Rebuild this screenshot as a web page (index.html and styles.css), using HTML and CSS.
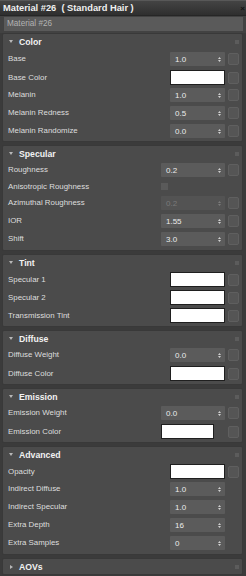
FILE: index.html
```html
<!DOCTYPE html>
<html>
<head>
<meta charset="utf-8">
<link rel="stylesheet" href="styles.css">
</head>
<body>
<div class="titlebar"><span class="ttl">Material #26  ( Standard Hair )</span><span class="close">×</span></div>
<div class="namebar"><div class="namefield">Material #26</div></div>
<div class="rollouts">

  <section class="rollout first">
    <div class="rhead"><span class="tri down"></span><span class="rtitle">Color</span><span class="pin"></span></div>
    <div class="rbody">
      <div class="row"><span class="lbl">Base</span><div class="spin"><span>1.0</span><svg class="arr" viewBox="0 0 3 7"><path d="M0 3L1.5 1L3 3ZM0 4L1.5 6L3 4Z"/></svg></div><span class="btn"></span></div>
      <div class="row"><span class="lbl">Base Color</span><div class="swatch"></div><span class="btn"></span></div>
      <div class="row"><span class="lbl">Melanin</span><div class="spin"><span>1.0</span><svg class="arr" viewBox="0 0 3 7"><path d="M0 3L1.5 1L3 3ZM0 4L1.5 6L3 4Z"/></svg></div><span class="btn"></span></div>
      <div class="row"><span class="lbl">Melanin Redness</span><div class="spin"><span>0.5</span><svg class="arr" viewBox="0 0 3 7"><path d="M0 3L1.5 1L3 3ZM0 4L1.5 6L3 4Z"/></svg></div><span class="btn"></span></div>
      <div class="row"><span class="lbl">Melanin Randomize</span><div class="spin"><span>0.0</span><svg class="arr" viewBox="0 0 3 7"><path d="M0 3L1.5 1L3 3ZM0 4L1.5 6L3 4Z"/></svg></div><span class="btn"></span></div>
    </div>
  </section>

  <section class="rollout wide">
    <div class="rhead"><span class="tri down"></span><span class="rtitle">Specular</span><span class="pin"></span></div>
    <div class="rbody">
      <div class="row"><span class="lbl">Roughness</span><div class="spin"><span>0.2</span><svg class="arr" viewBox="0 0 3 7"><path d="M0 3L1.5 1L3 3ZM0 4L1.5 6L3 4Z"/></svg></div><span class="btn"></span></div>
      <div class="row short"><span class="lbl">Anisotropic Roughness</span><div class="cell"><span class="check"></span></div><span></span></div>
      <div class="row"><span class="lbl">Azimuthal Roughness</span><div class="spin disabled"><span>0.2</span><svg class="arr" viewBox="0 0 3 7"><path d="M0 3L1.5 1L3 3ZM0 4L1.5 6L3 4Z"/></svg></div><span class="btn"></span></div>
      <div class="row"><span class="lbl">IOR</span><div class="spin"><span>1.55</span><svg class="arr" viewBox="0 0 3 7"><path d="M0 3L1.5 1L3 3ZM0 4L1.5 6L3 4Z"/></svg></div><span class="btn"></span></div>
      <div class="row"><span class="lbl">Shift</span><div class="spin"><span>3.0</span><svg class="arr" viewBox="0 0 3 7"><path d="M0 3L1.5 1L3 3ZM0 4L1.5 6L3 4Z"/></svg></div><span class="btn"></span></div>
    </div>
  </section>

  <section class="rollout">
    <div class="rhead"><span class="tri down"></span><span class="rtitle">Tint</span><span class="pin"></span></div>
    <div class="rbody">
      <div class="row"><span class="lbl">Specular 1</span><div class="swatch"></div><span class="btn"></span></div>
      <div class="row"><span class="lbl">Specular 2</span><div class="swatch"></div><span class="btn"></span></div>
      <div class="row"><span class="lbl">Transmission Tint</span><div class="swatch"></div><span class="btn"></span></div>
    </div>
  </section>

  <section class="rollout">
    <div class="rhead"><span class="tri down"></span><span class="rtitle">Diffuse</span><span class="pin"></span></div>
    <div class="rbody">
      <div class="row"><span class="lbl">Diffuse Weight</span><div class="spin"><span>0.0</span><svg class="arr" viewBox="0 0 3 7"><path d="M0 3L1.5 1L3 3ZM0 4L1.5 6L3 4Z"/></svg></div><span class="btn"></span></div>
      <div class="row"><span class="lbl">Diffuse Color</span><div class="swatch"></div><span class="btn"></span></div>
    </div>
  </section>

  <section class="rollout wide">
    <div class="rhead"><span class="tri down"></span><span class="rtitle">Emission</span><span class="pin"></span></div>
    <div class="rbody">
      <div class="row"><span class="lbl">Emission Weight</span><div class="spin"><span>0.0</span><svg class="arr" viewBox="0 0 3 7"><path d="M0 3L1.5 1L3 3ZM0 4L1.5 6L3 4Z"/></svg></div><span class="btn"></span></div>
      <div class="row"><span class="lbl">Emission Color</span><div class="cell"><div class="swatch narrow"></div></div><span class="btn"></span></div>
    </div>
  </section>

  <section class="rollout">
    <div class="rhead"><span class="tri down"></span><span class="rtitle">Advanced</span><span class="pin"></span></div>
    <div class="rbody">
      <div class="row"><span class="lbl">Opacity</span><div class="swatch"></div><span class="btn"></span></div>
      <div class="row"><span class="lbl">Indirect Diffuse</span><div class="spin"><span>1.0</span><svg class="arr" viewBox="0 0 3 7"><path d="M0 3L1.5 1L3 3ZM0 4L1.5 6L3 4Z"/></svg></div><span></span></div>
      <div class="row"><span class="lbl">Indirect Specular</span><div class="spin"><span>1.0</span><svg class="arr" viewBox="0 0 3 7"><path d="M0 3L1.5 1L3 3ZM0 4L1.5 6L3 4Z"/></svg></div><span></span></div>
      <div class="row"><span class="lbl">Extra Depth</span><div class="spin"><span>16</span><svg class="arr" viewBox="0 0 3 7"><path d="M0 3L1.5 1L3 3ZM0 4L1.5 6L3 4Z"/></svg></div><span></span></div>
      <div class="row"><span class="lbl">Extra Samples</span><div class="spin"><span>0</span><svg class="arr" viewBox="0 0 3 7"><path d="M0 3L1.5 1L3 3ZM0 4L1.5 6L3 4Z"/></svg></div><span></span></div>
    </div>
  </section>

  <section class="rollout collapsed">
    <div class="rhead"><span class="tri right"></span><span class="rtitle">AOVs</span><span class="pin"></span></div>
  </section>

</div>
</body>
</html>
```
FILE: styles.css
```css
html, body {
  margin: 0;
  padding: 0;
}
body {
  width: 246px;
  height: 576px;
  overflow: hidden;
  background: #3b3b3b;
  font-family: "Liberation Sans", Arial, sans-serif;
  color: #dcdcdc;
}

.titlebar {
  height: 15px;
  box-sizing: border-box;
  border-top: 1px solid #585858;
  background: linear-gradient(#444444, #2f2f2f);
  display: flex;
  align-items: center;
  justify-content: space-between;
  padding-left: 3px;
}
.ttl {
  white-space: pre;
  font-weight: bold;
  font-size: 9.3px;
  color: #f0f0f0;
}
.close {
  font-size: 8px;
  line-height: 13px;
  color: #111;
  font-weight: bold;
  padding-right: 1px;
}

.namebar {
  border-top: 1px solid #262626;
  padding: 1px 3px 2px 4px;
  background: #424242;
}
.namefield {
  height: 14px;
  background: #5a5a5a;
  color: #b2b2b2;
  font-size: 8.2px;
  line-height: 14px;
  padding-left: 3px;
}

.rollouts {
  padding: 0 3px 0 2px;
}
.rollout {
  border: 1px solid #393939;
  border-radius: 2px;
  background: #4b4b4b;
  margin-bottom: 3px;
  padding-bottom: 4px;
}
.rollout.first {
  padding-bottom: 3px;
}
.rollout.first .rbody {
  padding-top: 3px;
}
.rollout.collapsed {
  padding-bottom: 0;
}

.rhead {
  height: 15px;
  display: flex;
  align-items: center;
  padding-left: 5px;
  padding-right: 3px;
}
.tri {
  width: 0;
  height: 0;
  margin-right: 6px;
}
.tri.down {
  border-left: 2px solid transparent;
  border-right: 2px solid transparent;
  border-top: 3px solid #b8b8b8;
  margin-left: 1px;
}
.tri.right {
  border-top: 2px solid transparent;
  border-bottom: 2px solid transparent;
  border-left: 3px solid #b8b8b8;
  margin-left: 2px;
  margin-right: 6px;
}
.rtitle {
  font-weight: bold;
  font-size: 8.7px;
  color: #f2f2f2;
  flex: 1;
  padding-top: 1px;
}
.pin {
  width: 4px;
  height: 4px;
  background: #5c5c5c;
}

.rbody {
  padding-top: 2px;
  display: grid;
  row-gap: 4px;
}
.row {
  display: grid;
  grid-template-columns: 1fr 55px 11px;
  column-gap: 3px;
  height: 14px;
  align-items: center;
  padding: 0 3px 0 5px;
}
.wide .row {
  grid-template-columns: 1fr 64px 11px;
}
.row.short {
  height: 11px;
}
.lbl {
  font-size: 7.9px;
  color: #dedede;
  white-space: nowrap;
  padding-bottom: 1px;
}

.spin {
  height: 14px;
  background: #5b5b5b;
  border-radius: 1px;
  display: flex;
  align-items: center;
  justify-content: space-between;
  padding: 0 4px 0 5px;
  box-sizing: border-box;
  font-size: 8px;
  color: #ececec;
}
.spin .arr {
  width: 3px;
  height: 7px;
  fill: #d0d0d0;
}
.spin.disabled {
  background: #535353;
  color: #7a7a7a;
}
.spin.disabled .arr {
  fill: #7a7a7a;
}

.swatch {
  height: 15px;
  box-sizing: border-box;
  background: #ffffff;
  border: 1px solid #1f1f1f;
}
.swatch.narrow {
  width: 53px;
}
.cell {
  display: flex;
  align-items: center;
}
.check {
  width: 7px;
  height: 7px;
  background: #5a5a5a;
}

.btn {
  height: 12px;
  box-sizing: border-box;
  background: #555555;
  border: 1px solid #5f5f5f;
  border-radius: 2px;
}
```
